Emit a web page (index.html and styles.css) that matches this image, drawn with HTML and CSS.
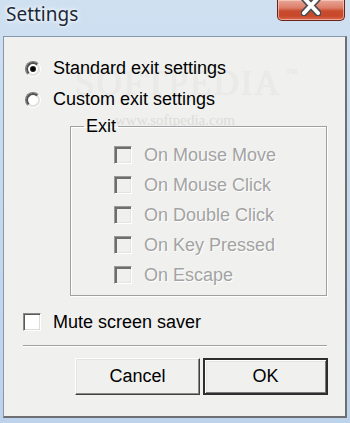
FILE: index.html
```html
<!DOCTYPE html>
<html lang="en">
<head>
  <meta charset="UTF-8" />
  <title>Settings</title>
  <link rel="stylesheet" href="styles.css">
</head>
<body>
  <div class="window">
    <div class="titlebar">
      <span class="title">Settings</span>
      <button class="close" title="Close">
        <svg width="20" height="16" viewBox="0 0 20 16">
          <path d="M3 -2 L17 13 M17 -2 L3 13" stroke="#4a4a52" stroke-width="7" stroke-linecap="round" fill="none" />
          <path d="M3 -2 L17 13 M17 -2 L3 13" stroke="#fff" stroke-width="4" stroke-linecap="round" fill="none" />
        </svg>
      </button>
    </div>

    <div class="client">
      <!-- watermark from the screenshot -->
      <div class="wm-big">SOFTPEDIA<span class="tm">™</span></div>
      <div class="wm-url">www.softpedia.com</div>

      <div class="radio-row"><span class="radio checked"></span>Standard exit settings</div>
      <div class="radio-row"><span class="radio"></span>Custom exit settings</div>

      <fieldset class="group">
        <legend>Exit</legend>
        <div class="group-body">
          <div class="check-row disabled"><span class="check"></span>On Mouse Move</div>
          <div class="check-row disabled"><span class="check"></span>On Mouse Click</div>
          <div class="check-row disabled"><span class="check"></span>On Double Click</div>
          <div class="check-row disabled"><span class="check"></span>On Key Pressed</div>
          <div class="check-row disabled"><span class="check"></span>On Escape</div>
        </div>
      </fieldset>

      <div class="check-row mute"><span class="check"></span>Mute screen saver</div>

      <div class="sep"></div>

      <div class="buttons">
        <button class="btn">Cancel</button>
        <button class="btn default">OK</button>
      </div>
    </div>
  </div>
</body>
</html>
```

FILE: styles.css
```css
* {
  box-sizing: border-box;
}
body {
  margin: 0;
  padding: 0;
  width: 350px;
  height: 423px;
  overflow: hidden;
  font-family: 'Liberation Sans', Arial, sans-serif;
  font-size: 18px;
  color: #000;
}
.window {
  width: 350px;
  height: 423px;
  background: linear-gradient(180deg, #cfe0f1 0%, #c6daee 40%, #bdd3eb 100%);
  padding: 0 3px 5px 3px;
  display: flex;
  flex-direction: column;
}
.titlebar {
  height: 36px;
  display: flex;
  align-items: flex-start;
}
.title {
  font-family: 'Noto Sans', sans-serif;
  font-size: 19px;
  line-height: 26px;
  margin: 1px 0 0 3px;
  color: #1b2838;
  text-shadow: 0 0 6px #fff, 0 0 3px #fff;
}
.close {
  margin-left: auto;
  margin-right: 2px;
  width: 68px;
  height: 21px;
  padding: 0;
  border: 1px solid #6b2217;
  border-top: none;
  border-radius: 0 0 5px 5px;
  background: linear-gradient(180deg, #e9a899 0%, #dc7d68 40%, #c84b2d 55%, #c9482a 80%, #d9694c 100%);
  box-shadow: inset 0 0 0 1px rgba(255, 220, 210, 0.55);
  display: flex;
  justify-content: center;
  align-items: flex-start;
}
.client {
  position: relative;
  flex: 1;
  background: #f0f0ee;
  border-top: 1px solid #8597aa;
  border-left: 1px solid #8597aa;
  border-right: 2px solid #6d6f72;
  border-bottom: 2px solid #6d6f72;
  padding-top: 16px;
  overflow: hidden;
}
.wm-big {
  position: absolute;
  left: 71px;
  top: 29px;
  font-family: 'Liberation Serif', serif;
  font-size: 35px;
  line-height: 35px;
  letter-spacing: 2px;
  color: #eaeae8;
  text-shadow: 0 0 1px #e4e4e2;
}
.wm-big .tm {
  font-size: 12px;
  line-height: 12px;
  vertical-align: 18px;
  margin-left: 4px;
}
.wm-url {
  position: absolute;
  left: 111px;
  top: 76px;
  font-family: 'Liberation Serif', serif;
  font-size: 15px;
  line-height: 15px;
  color: #dcdcda;
}
.radio-row {
  position: relative;
  height: 31px;
  display: flex;
  align-items: center;
  padding-left: 21px;
  gap: 12px;
}
.radio {
  width: 16px;
  height: 16px;
  border-radius: 50%;
  border: 1px solid;
  border-color: #7c7c7c #ffffff #ffffff #7c7c7c;
  position: relative;
  flex: none;
}
.radio::before {
  content: '';
  position: absolute;
  inset: 0;
  border-radius: 50%;
  border: 2px solid;
  border-color: #505050 #e2e2e0 #e2e2e0 #505050;
  background: #fff;
}
.radio.checked::after {
  content: '';
  position: absolute;
  left: 5px;
  top: 5px;
  width: 4px;
  height: 4px;
  border-radius: 50%;
  background: #000;
  box-shadow: 0 0 0 1px #222;
}
.group {
  position: relative;
  margin: 1px 18px 0 66px;
  padding: 0;
  border: 1px solid #a0a0a0;
  box-shadow: 1px 1px 0 #fff, inset 1px 1px 0 #fff;
  min-width: 0;
}
.group legend {
  margin-left: 13px;
  padding: 0 2px;
  line-height: 20px;
}
.group-body {
  padding: 4px 0 5px 43px;
}
.check-row {
  height: 30px;
  display: flex;
  align-items: center;
  gap: 12px;
}
.check {
  width: 18px;
  height: 18px;
  flex: none;
  border: 1px solid;
  border-color: #8a8a8a #fff #fff #8a8a8a;
  box-shadow: inset 1px 1px 0 #5a5a5a, inset -1px -1px 0 #dcdcdc;
  background: #fff;
}
.check-row.disabled {
  color: #a3a3a3;
  text-shadow: 1px 1px 0 #fff;
}
.check-row.disabled .check {
  background: #f0f0ee;
  border-color: #9a9a9a #fff #fff #9a9a9a;
  box-shadow: inset 2px 2px 0 #6e6e6e, inset -1px -1px 0 #e4e4e4;
}
.check-row.mute {
  margin: 11px 0 0 19px;
  gap: 12px;
}
.sep {
  margin: 8px 18px 0 19px;
  height: 2px;
  border-top: 1px solid #a0a0a0;
  border-bottom: 1px solid #fff;
}
.buttons {
  display: flex;
  justify-content: flex-end;
  gap: 3px;
  margin: 11px 17px 0 0;
}
.btn {
  width: 125px;
  height: 37px;
  font-family: 'Liberation Sans', Arial, sans-serif;
  font-size: 18px;
  color: #000;
  background: #f0f0ee;
  border: 1px solid;
  border-color: #fff #404040 #404040 #fff;
  box-shadow: inset -1px -1px 0 #8a8a8a, inset 1px 1px 0 #e4e4e2;
  padding: 0;
}
.btn.default {
  border: 2px solid #2e2e2e;
  box-shadow: inset 1px 1px 0 #fff, inset -1px -1px 0 #7a7a7a, inset 2px 2px 0 #e4e4e2;
}
```
